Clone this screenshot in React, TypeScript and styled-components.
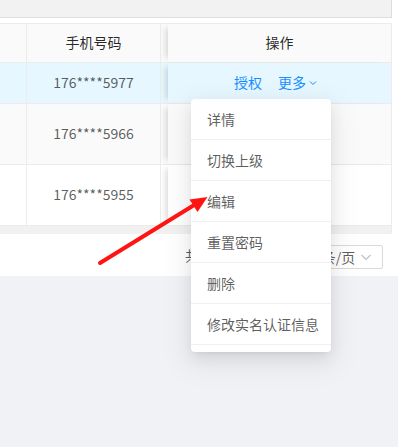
import styled, { createGlobalStyle } from "styled-components";

const GlobalStyle = createGlobalStyle`
  body {
    margin: 0;
    font-family: "Noto Sans CJK SC", "Noto Sans", sans-serif;
    font-size: 14px;
    color: rgba(0, 0, 0, 0.65);
  }
`;

type Row = { phone: string; height: number; tone: "active" | "hover" | "plain"; actions?: boolean };

const rows: Row[] = [
  { phone: "176****5977", height: 40, tone: "active", actions: true },
  { phone: "176****5966", height: 60, tone: "hover" },
  { phone: "176****5955", height: 60, tone: "plain" },
];

const menuItems = ["详情", "切换上级", "编辑", "重置密码", "删除", "修改实名认证信息"];

const toneBg = {
  active: "#e6f7ff",
  hover: "#fafafa",
  plain: "#ffffff",
};

export default function App() {
  return (
    <>
      <GlobalStyle />
      <Page>
        <Content>
          <SearchBar />
          <Table>
            <HeadRow>
              <Cell $w={27} />
              <Cell $w={134}>手机号码</Cell>
              <Gap />
              <FixedCell>操作</FixedCell>
            </HeadRow>
            {rows.map((r) => (
              <BodyRow key={r.phone} $h={r.height} $tone={r.tone}>
                <Cell $w={27} />
                <Cell $w={134}>{r.phone}</Cell>
                <Gap />
                <FixedCell>
                  {r.actions && (
                    <Actions>
                      <Link>授权</Link>
                      <Link>
                        更多
                        <Chevron width="8" height="8" viewBox="0 0 8 8">
                          <path d="M1 2.5 L4 5.5 L7 2.5" fill="none" stroke="currentColor" strokeWidth="1" />
                        </Chevron>
                      </Link>
                    </Actions>
                  )}
                </FixedCell>
              </BodyRow>
            ))}
            <ScrollBar />
          </Table>
          <Pagination>
            <Total>共 3 条</Total>
            <SizeSelect>
              10 条/页
              <SelectArrow width="12" height="12" viewBox="0 0 12 12">
                <path d="M1.5 4 L6 8.5 L10.5 4" fill="none" stroke="#bfbfbf" strokeWidth="1.1" />
              </SelectArrow>
            </SizeSelect>
          </Pagination>
        </Content>

        <Menu>
          {menuItems.map((m) => (
            <MenuItem key={m}>{m}</MenuItem>
          ))}
        </Menu>

        <Arrow width="398" height="447" viewBox="0 0 398 447">
          <line x1="100" y1="263" x2="195" y2="204.5" stroke="#ff1414" strokeWidth="4" strokeLinecap="round" />
          <polygon points="207.5,197 189.5,199.5 197.5,212" fill="#ff1414" />
        </Arrow>
      </Page>
    </>
  );
}

const Page = styled.div`
  position: relative;
  width: 398px;
  height: 447px;
  overflow: hidden;
  background: #f0f2f5;
`;

const Content = styled.div`
  background: #fff;
`;

const SearchBar = styled.div`
  width: 391px;
  height: 17px;
  background: #f2f2f2;
  border-right: 1px solid #dedede;
  border-bottom: 1px solid #dedede;
`;

const Table = styled.div`
  width: 391px;
  margin-top: 5px;
  border-top: 1px solid #ececec;
  border-right: 1px solid #ececec;
`;

const HeadRow = styled.div`
  display: flex;
  height: 38px;
  background: #fafafa;
  color: rgba(0, 0, 0, 0.85);
  border-bottom: 1px solid #ececec;
`;

const BodyRow = styled.div<{ $h: number; $tone: keyof typeof toneBg }>`
  display: flex;
  height: ${(p) => p.$h}px;
  background: ${(p) => toneBg[p.$tone]};
  border-bottom: 1px solid #ececec;
`;

const Cell = styled.div<{ $w: number }>`
  width: ${(p) => p.$w}px;
  flex: none;
  box-sizing: border-box;
  border-right: 1px solid #ececec;
  display: flex;
  align-items: center;
  justify-content: center;
  padding-bottom: 2px;
`;

const Gap = styled.div`
  width: 7px;
  flex: none;
`;

const FixedCell = styled.div`
  flex: 1;
  display: flex;
  align-items: center;
  justify-content: center;
  padding-bottom: 2px;
  box-shadow: -6px 0 6px -4px rgba(0, 0, 0, 0.15);
`;

const Actions = styled.div`
  display: flex;
  gap: 16px;
  margin-left: -8px;
`;

const Link = styled.span`
  color: #1890ff;
  display: inline-flex;
  align-items: center;
`;

const Chevron = styled.svg`
  margin-left: 3px;
  margin-top: 2px;
`;

const ScrollBar = styled.div`
  height: 8px;
  background: #f1f1f1;
`;

const Pagination = styled.div`
  width: 392px;
  height: 42px;
  display: flex;
  align-items: center;
  justify-content: flex-end;
  box-sizing: border-box;
  padding-right: 9px;
`;

const Total = styled.span`
  margin-right: 66px;
  color: rgba(0, 0, 0, 0.65);
`;

const SizeSelect = styled.div`
  width: 90px;
  height: 24px;
  box-sizing: border-box;
  border: 1px solid #d9d9d9;
  border-radius: 2px;
  display: flex;
  align-items: center;
  justify-content: space-between;
  padding: 0 10px 0 9px;
  margin-top: 4px;
`;

const SelectArrow = styled.svg`
  flex: none;
`;

const Menu = styled.ul`
  position: absolute;
  top: 99px;
  left: 191px;
  width: 140px;
  margin: 0;
  padding: 0 0 7px;
  list-style: none;
  background: #fff;
  border-radius: 4px;
  box-shadow: 0 3px 6px -4px rgba(0, 0, 0, 0.12), 0 6px 16px 0 rgba(0, 0, 0, 0.08),
    0 9px 28px 8px rgba(0, 0, 0, 0.05);
`;

const MenuItem = styled.li`
  height: 40px;
  line-height: 40px;
  padding-left: 16px;
  border-bottom: 1px solid #f0f0f0;
  color: rgba(0, 0, 0, 0.65);
  white-space: nowrap;
`;

const Arrow = styled.svg`
  position: absolute;
  left: 0;
  top: 0;
  pointer-events: none;
`;
